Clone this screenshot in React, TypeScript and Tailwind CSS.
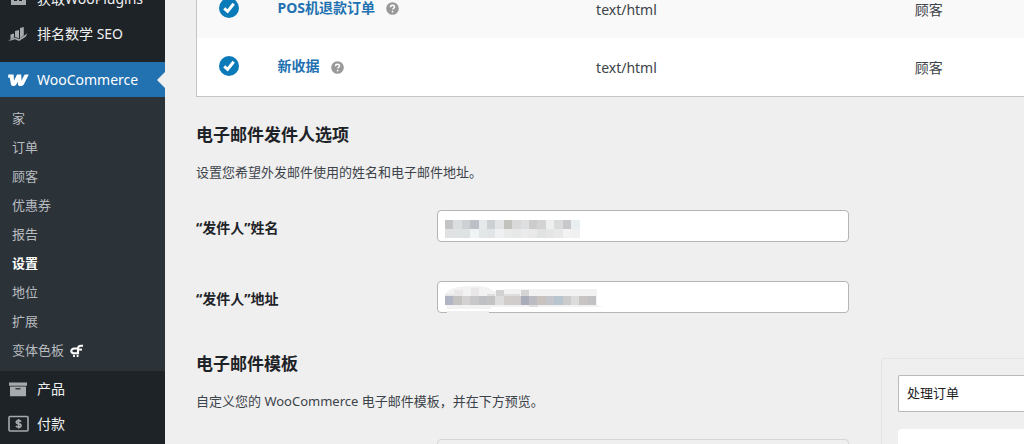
import type { ReactNode } from "react";

const submenu = ["家", "订单", "顾客", "优惠券", "报告", "设置", "地位", "扩展", "变体色板"];

const emails = [
  { name: "POS机退款订单", type: "text/html", recipient: "顾客" },
  { name: "新收据", type: "text/html", recipient: "顾客" },
];

const nameTop = ["#c3c4c6", "#dcdddf", "#ced1d4", "#bcc1c8", "#e6e8e9", "#cbd0d3", "#e2e4e5", "#c2c2bd", "#d9d9d9", "#dedfe0", "#cccccd", "#d3d3d3", "#eeefef", "#dadbdc", "#c8c8ca", "#e9eef0"];
const nameBottom = ["#dfe1e3", "#e0e3e3", "#dfe2e3", "#f0f3f3", "#e3e7e8", "#e1e5e7", "#eef0f1", "#e9eaea", "#e7e8e8", "#eaebea", "#e9e9e9", "#e1e2e2", "#e5e5e5", "#e8e8e8", "#f2f2f2", "#f0f0f0"];
const addressRow = ["#b1b5c3", "#c5c2c2", "#d3d1d2", "#c8c8ca", "#bfc0c3", "#c4c3c3", "#dedddd", "#d1cdcb", "#cfcccb", "#a9adb9", "#bcbdc2", "#c8c3bf", "#c4c6cb", "#b7c6ce", "#cbcbcd", "#dddcdc", "#c7c4c3", "#c2c2c4"];

const PluginIcon = () => (
  <svg width="20" height="20" viewBox="0 0 20 20" fill="#a7aaad">
    <path d="M3 2h15v14H3z" />
    <path d="M6 8h3v4H6zM11 8l3-2v6h-3z" fill="#1d2327" />
  </svg>
);

const SeoIcon = () => (
  <svg width="20" height="20" viewBox="0 0 20 20" fill="#a7aaad">
    <path d="M2.5 10.5 6 9.5v4l-3.5 2zM7 7l4-1v8.5L7 12.8zM12 4l3.8-1v8.5L12 14.5z" />
    <path d="M0 16.5 7 13.4l4 1.9 8.5-6-1.8 3.5-6.6 4.2-4.1-1.7-3.8 1.3z" />
  </svg>
);

const WooIcon = () => (
  <svg width="22" height="20" viewBox="0 0 22 20" fill="#fff">
    <path d="M.2 4.600H5.600L6 10.800 9 4.600H13.200L13.600 10.800 16 5.600Q16.500 4.600 17.600 4.600H20.800L15.800 14.600Q15 16 13.400 16H11.600Q10.200 16 10 14.600L9.700 11.800 8.300 14.600Q7.600 16 6 16H4.700Q3.300 16 3 14.600L1.700 7.800H.2z" />
  </svg>
);

const ProductIcon = () => (
  <svg width="20" height="20" viewBox="0 0 20 20" fill="#a7aaad">
    <path d="M1 3.5h18v3.2H1zM2 7.6h16v9.6H2z" />
    <path d="M7.5 9.2h5v1.2h-5z" fill="#1d2327" />
  </svg>
);

const PaymentIcon = () => (
  <svg width="22" height="20" viewBox="0 0 22 20" fill="none" stroke="#a7aaad">
    <rect x="1" y="2.5" width="19" height="14.5" rx="1" strokeWidth="1.6" />
    <path d="M13 7.6c-.5-.8-1.4-1-2.4-1-1.3 0-2.3.5-2.3 1.600 0 2.400 4.700.8 4.700 3.200 0 1.100-1.100 1.700-2.400 1.700-1.100 0-2.100-.4-2.600-1.300M10.600 5v9.600" strokeWidth="1.700" />
  </svg>
);

const SwatchIcon = () => (
  <svg width="14" height="14" viewBox="0 0 14 14" fill="none" stroke="#fff">
    <path d="M7 4.500H4.400C2.400 4.500 1.300 5.500 1.300 7S2.400 9.300 4.400 9.300H8V4.600C8 2.600 9 1.700 11 1.700H13" strokeWidth="2.100" />
    <path d="M8 5.600H12" strokeWidth="2" />
    <path d="M4 10.800V13M7.600 10.800V13" strokeWidth="1.800" />
  </svg>
);

const EnabledIcon = () => (
  <svg width="20" height="20" viewBox="0 0 20 20" role="img" aria-label="已启用">
    <circle cx="10" cy="10" r="10" fill="#0a7ab8" />
    <path d="M5.200 10.400 8.600 13.400 14.700 5.800" fill="none" stroke="#fff" strokeWidth="3" />
  </svg>
);

const HelpIcon = () => (
  <svg width="13" height="13" viewBox="0 0 13 13">
    <circle cx="6.500" cy="6.500" r="6.300" fill="#999" />
    <path d="M4.500 5.200c0-1.200.8-1.900 2-1.900s2 .6 2 1.700c0 1.200-1.800 1.300-1.800 2.600" fill="none" stroke="#fff" strokeWidth="1.500" />
    <circle cx="6.600" cy="9.600" r=".9" fill="#fff" />
  </svg>
);

const MenuItem = ({ icon, label, active = false }: { icon: ReactNode; label: string; active?: boolean }) => (
  <a
    href="#"
    className={
      active
        ? "relative flex h-[35px] items-center bg-[#2271b1] pl-2 text-sm text-white"
        : "flex h-[35px] items-center pl-2 text-sm text-[#f0f0f1]"
    }
  >
    <span className="w-[29px] shrink-0">{icon}</span>
    {label}
    {active && (
      <span className="absolute top-[10px] right-0 border-y-8 border-r-8 border-y-transparent border-r-[#efefef]" />
    )}
  </a>
);

const NameMask = () => (
  <svg className="absolute top-[10px] left-2" width="136" height="18" shapeRendering="crispEdges">
    {nameTop.map((c, i) => (
      <rect key={i} x={i * 8.4} y="0" width="8.6" height="9" fill={c} />
    ))}
    {nameBottom.map((c, i) => (
      <rect key={i} x={i * 8.4} y="9" width="8.6" height="9" fill={c} />
    ))}
  </svg>
);

const AddressMask = () => (
  <svg className="absolute top-1 left-2" width="160" height="28">
    <path d="M0 11Q1 2 22 1T48 6L62 4H152V20l6 2H46v2H2z" fill="#f3f2f2" />
    <path d="M2 26h42v2H2z" fill="#efefef" />
    <path d="M0 9h9V5h9v6H0zM26 3h8v8h-8z" fill="#e9e7e7" />
    <path d="M42 9h8v2h-8zM59 9h16v2H59z" fill="#dededf" />
    <path d="M51 5h8v6h-8z" fill="#d2d2d3" />
    <path d="M76 5h8v6h-8z" fill="#d5d4d5" />
    {addressRow.map((c, i) => (
      <rect key={i} x={i * 8.4} y="11" width="8.6" height="9" fill={c} shapeRendering="crispEdges" />
    ))}
    <path d="M84 20h9V22h-9z" fill="#e1dfdf" />
  </svg>
);

const Field = ({ id, label, mask }: { id: string; label: string; mask: ReactNode }) => (
  <div className="flex items-center">
    <label htmlFor={id} className="w-[241px] shrink-0 pt-[3px] text-sm font-bold text-[#1d2327]">
      {label}
    </label>
    <div className="relative flex-1">
      <input id={id} type="text" className="block h-8 w-full rounded border border-[#b4b5b8] bg-white px-2 text-sm" />
      {mask}
    </div>
  </div>
);

const App = () => {
  return (
    <div
      lang="zh-CN"
      className="flex h-screen overflow-hidden bg-[#efefef] font-['Noto_Sans','Noto_Sans_CJK_SC',sans-serif] text-[#3c434a]"
    >
      <nav className="w-[165px] shrink-0 overflow-hidden bg-[#1d2327]">
        <div className="-mt-[19px]">
          <MenuItem icon={<PluginIcon />} label="获取WooPlugins" />
          <MenuItem icon={<SeoIcon />} label="排名数学 SEO" />
          <div className="h-[11px]" />
          <MenuItem icon={<WooIcon />} label="WooCommerce" active />
          <ul className="bg-[#2c3338] pt-[7px] pb-[6px]">
            {submenu.map((item) => (
              <li key={item}>
                <a
                  href="#"
                  className={
                    item === "设置"
                      ? "flex h-[29px] items-center pl-3 text-[13px] font-bold text-white"
                      : "flex h-[29px] items-center gap-[6px] pl-3 text-[13px] text-[#b8bcc0]"
                  }
                >
                  {item}
                  {item === "变体色板" && <SwatchIcon />}
                </a>
              </li>
            ))}
          </ul>
          <MenuItem icon={<ProductIcon />} label="产品" />
          <MenuItem icon={<PaymentIcon />} label="付款" />
        </div>
      </nav>

      <main className="min-w-0 flex-1 pl-[31px]">
        <table className="-mt-[22px] w-full table-fixed border border-r-0 border-[#c3c4c7] bg-white text-left text-sm">
          <colgroup>
            <col className="w-[58px]" />
            <col className="w-[38.5%]" />
            <col className="w-[38.5%]" />
            <col />
          </colgroup>
          <tbody>
            {emails.map((email) => (
              <tr key={email.name} className="h-[59px] odd:bg-[#f9f9f9]">
                <td className="pb-px pl-[22px]">
                  <EnabledIcon />
                </td>
                <td className="pb-px pl-[23px]">
                  <div className="flex items-center gap-[11px]">
                    <a href="#" className="font-bold text-[#2271b1]">
                      {email.name}
                    </a>
                    <span className="pt-[2px]">
                      <HelpIcon />
                    </span>
                  </div>
                </td>
                <td className="pt-[3px] pl-[23px]">{email.type}</td>
                <td className="pt-[3px] pl-[23px]">{email.recipient}</td>
              </tr>
            ))}
          </tbody>
        </table>

        <section className="pt-[26px] pr-[175px]">
          <h2 className="text-[17px] leading-6 font-bold text-[#1d2327]">电子邮件发件人选项</h2>
          <p className="mt-[15px] text-[13px] leading-5">设置您希望外发邮件使用的姓名和电子邮件地址。</p>
          <div className="mt-7 flex flex-col gap-[39px]">
            <Field id="from-name" label="“发件人”姓名" mask={<NameMask />} />
            <Field id="from-address" label="“发件人”地址" mask={<AddressMask />} />
          </div>
        </section>

        <section className="mt-[39px] flex gap-8">
          <div className="min-w-0 flex-1">
            <h2 className="text-[17px] leading-6 font-bold text-[#1d2327]">电子邮件模板</h2>
            <p className="mt-[15px] text-[13px] leading-5">自定义您的 WooCommerce 电子邮件模板，并在下方预览。</p>
            <div className="mt-7 ml-[241px] h-24 rounded border border-[#d5d6d8]" />
          </div>
          <aside className="mt-[6px] w-[143px] shrink-0 rounded-tl border-t border-l border-[#e4e4e5] pt-4 pl-4">
            <select
              aria-label="电子邮件类型"
              className="block h-[37px] w-full appearance-none rounded-l-xs border border-r-0 border-[#b9babd] bg-white px-2 text-[13px] text-[#1e1e1e]"
            >
              <option>处理订单</option>
            </select>
            <div className="mt-[17px] h-40 rounded-tl bg-white" />
          </aside>
        </section>
      </main>
    </div>
  );
};

export default App;
